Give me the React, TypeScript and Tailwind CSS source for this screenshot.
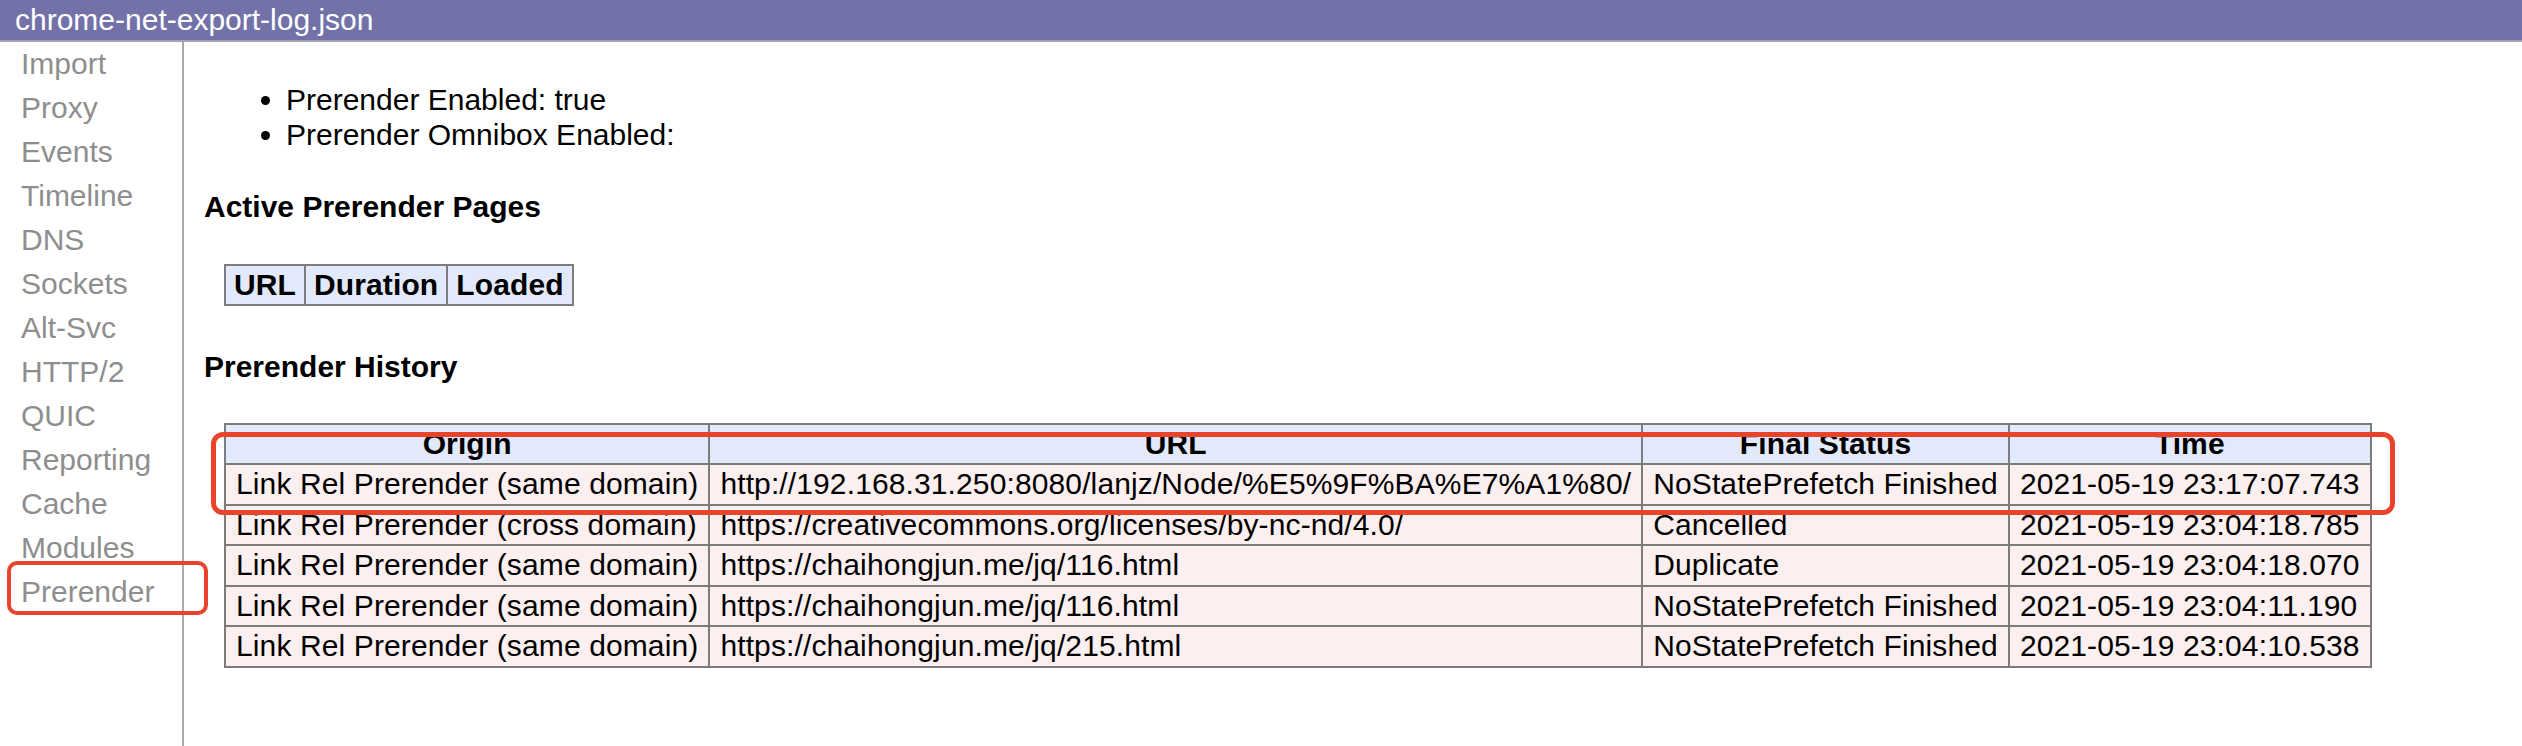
const tabs = [
  "Import",
  "Proxy",
  "Events",
  "Timeline",
  "DNS",
  "Sockets",
  "Alt-Svc",
  "HTTP/2",
  "QUIC",
  "Reporting",
  "Cache",
  "Modules",
  "Prerender",
];

const history = [
  {
    origin: "Link Rel Prerender (same domain)",
    url: "http://192.168.31.250:8080/lanjz/Node/%E5%9F%BA%E7%A1%80/",
    status: "NoStatePrefetch Finished",
    time: "2021-05-19 23:17:07.743",
  },
  {
    origin: "Link Rel Prerender (cross domain)",
    url: "https://creativecommons.org/licenses/by-nc-nd/4.0/",
    status: "Cancelled",
    time: "2021-05-19 23:04:18.785",
  },
  {
    origin: "Link Rel Prerender (same domain)",
    url: "https://chaihongjun.me/jq/116.html",
    status: "Duplicate",
    time: "2021-05-19 23:04:18.070",
  },
  {
    origin: "Link Rel Prerender (same domain)",
    url: "https://chaihongjun.me/jq/116.html",
    status: "NoStatePrefetch Finished",
    time: "2021-05-19 23:04:11.190",
  },
  {
    origin: "Link Rel Prerender (same domain)",
    url: "https://chaihongjun.me/jq/215.html",
    status: "NoStatePrefetch Finished",
    time: "2021-05-19 23:04:10.538",
  },
];

const th = "border-2 border-[#7c7c7c] bg-[#e1e9fa] px-[10px] py-0.5 text-center font-bold whitespace-nowrap";
const td = "border-2 border-[#7c7c7c] bg-[#fcefef] px-[10px] py-0.5 text-left whitespace-nowrap";
const thSmall = "border-2 border-[#7c7c7c] bg-[#e1e9fa] px-[8px] py-0.5 text-center font-bold whitespace-nowrap";

export default function App() {
  return (
    <div className="relative flex h-[746px] w-[2522px] flex-col overflow-hidden bg-white font-['Liberation_Sans',Arial,sans-serif] text-[30px] leading-[1.15] text-black">
      {/* title bar */}
      <div className="h-[42px] shrink-0 border-b-2 border-[#a3a3b8] bg-[#7272a9] pl-[15px] leading-[40px] text-white">
        chrome-net-export-log.json
      </div>

      <div className="flex min-h-0 flex-1">
        {/* tab list */}
        <ul className="w-[184px] shrink-0 border-r-2 border-[#ababab]">
          {tabs.map((t) => (
            <li key={t} className="h-[44px] pl-[21px] leading-[44px] text-[#8e8e8e]">
              {t}
            </li>
          ))}
        </ul>

        {/* prerender view */}
        <div className="flex-1 pl-[20px]">
          <ul className="mt-[41px] list-disc pl-[82px]">
            <li>Prerender Enabled: true</li>
            <li>Prerender Omnibox Enabled:</li>
          </ul>

          <h4 className="mt-[38px] font-bold">Active Prerender Pages</h4>
          <table className="mt-[39px] ml-[20px] tracking-[0.12px]">
            <thead>
              <tr>
                <th className={thSmall}>URL</th>
                <th className={thSmall}>Duration</th>
                <th className={thSmall}>Loaded</th>
              </tr>
            </thead>
          </table>

          <h4 className="mt-[44px] font-bold">Prerender History</h4>
          <table className="mt-[38px] ml-[20px] tracking-[0.12px]">
            <thead>
              <tr>
                <th className={th}>Origin</th>
                <th className={th}>URL</th>
                <th className={th}>Final Status</th>
                <th className={th}>Time</th>
              </tr>
            </thead>
            <tbody>
              {history.map((r, i) => (
                <tr key={i}>
                  <td className={td}>{r.origin}</td>
                  <td className={td}>{r.url}</td>
                  <td className={td}>{r.status}</td>
                  <td className={td}>{r.time}</td>
                </tr>
              ))}
            </tbody>
          </table>
        </div>
      </div>

      {/* red annotation boxes */}
      <div className="pointer-events-none absolute left-[7px] top-[561px] h-[54px] w-[201px] rounded-[10px] border-4 border-[#e9432c]" />
      <div className="pointer-events-none absolute left-[211px] top-[432px] h-[83px] w-[2184px] rounded-[12px] border-[5px] border-[#e9432c]" />
    </div>
  );
}
